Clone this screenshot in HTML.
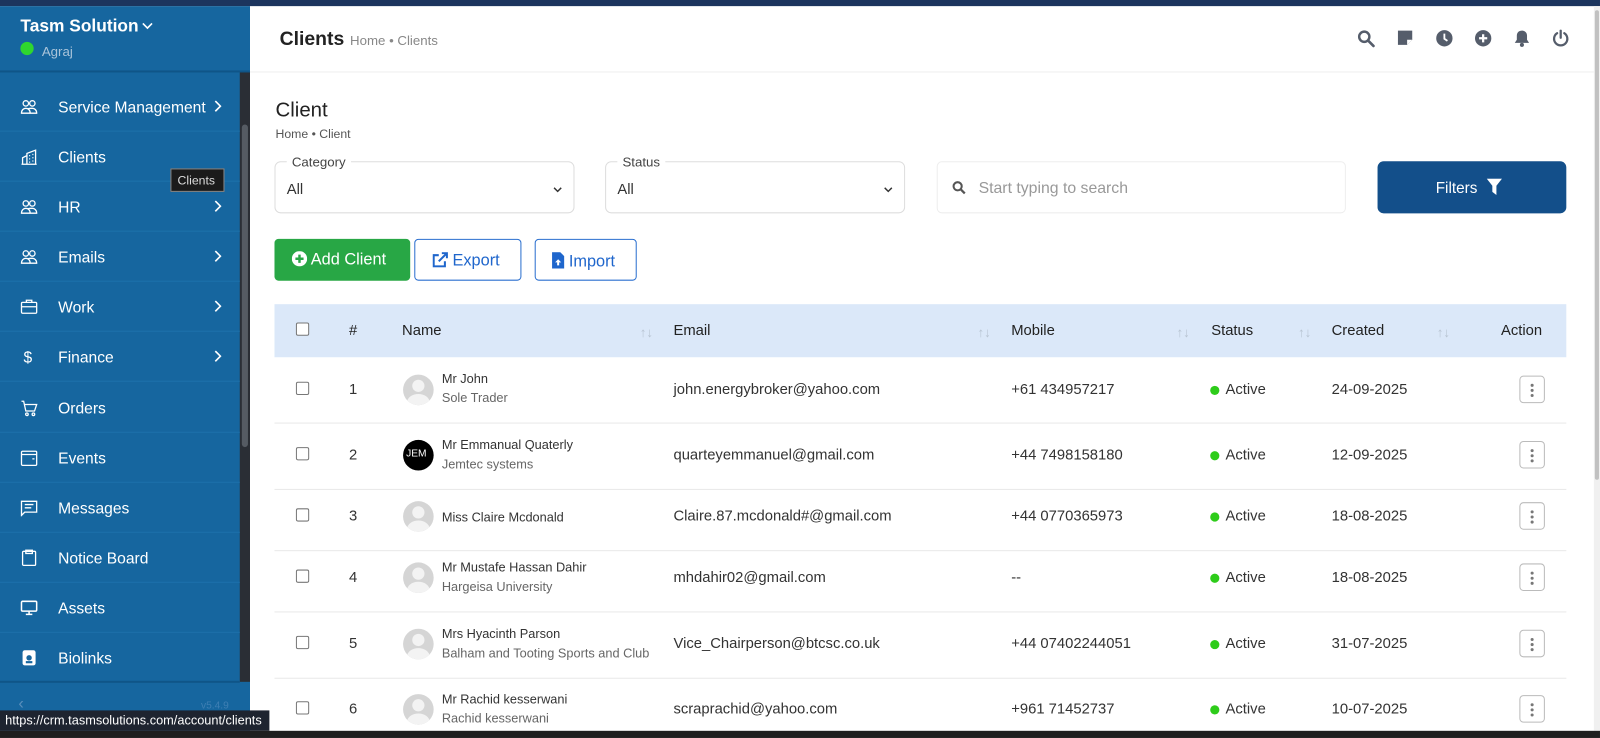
<!DOCTYPE html>
<html><head><meta charset="utf-8"><style>
*{box-sizing:border-box;margin:0;padding:0}
html,body{width:1600px;height:738px;overflow:hidden;background:#fff;font-family:"Liberation Sans",Arial,sans-serif}
#w{position:absolute;left:0;top:0;width:1568px;height:723px;transform:scale(1.0204,1.0207);transform-origin:0 0}
.a{position:absolute}
.sb{left:0;top:6px;width:245px;height:710px;background:#16669f}
.mi{position:absolute;left:0;width:235px;height:49px;border-bottom:1px solid #1d71ab;color:#fff;font-size:15.3px}
.mi span{position:absolute;left:57px;top:17px}
.mi svg{position:absolute;left:20px;top:16px}
.mi .ch{position:absolute;left:210px;top:18px}
.th{font-size:14.5px;color:#222;top:316px}
.srt{color:#b8c4d2;font-size:13px;top:318px}
.row{position:absolute;left:269px;width:1266px;border-bottom:1px solid #e8e8e8}
.cb{position:absolute;width:13px;height:13px;border:1px solid #777;border-radius:2px;background:#fff}
.t{position:absolute;font-size:14.5px;color:#333}
.av{position:absolute;left:395px;width:30px;height:30px;border-radius:50%;background:#d5d5d5;overflow:hidden}
.av:before{content:"";position:absolute;left:9px;top:5px;width:12px;height:12px;border-radius:50%;background:#f3f3f3}
.av:after{content:"";position:absolute;left:4px;top:19px;width:22px;height:16px;border-radius:50%;background:#f3f3f3}
.av.jem{background:#000}
.av.jem:before,.av.jem:after{display:none}
.nm{position:absolute;left:433px;font-size:12.5px;color:#333}
.sub{position:absolute;left:433px;font-size:12.5px;color:#666}
.dot{position:absolute;left:1186px;width:9px;height:9px;border-radius:50%;background:#2ecc1a}
.act{position:absolute;left:1489px;width:25px;height:27px;border:1px solid #bbb;border-radius:4px;background:#fff}
.act i{position:absolute;left:10px;width:3px;height:3px;border-radius:50%;background:#777}
.hi{position:absolute;top:29px}
</style></head><body><div id="w">
<div class="a" style="left:0;top:0;width:1568px;height:6px;background:#1c355e"></div>
<div class="a sb"></div>
<div class="a" style="left:20px;top:16px;color:#fff;font-size:17px;font-weight:bold">Tasm Solution</div>
<svg class="a" style="left:139px;top:22px" width="11" height="7" viewBox="0 0 11 7"><path d="M1 1l4.5 4.5L10 1" fill="none" stroke="#fff" stroke-width="1.6"/></svg>
<div class="a" style="left:20px;top:41px;width:13px;height:13px;border-radius:50%;background:#2fd62f"></div>
<div class="a" style="left:41px;top:43px;color:#a9c4da;font-size:13px">Agraj</div>
<div class="a" style="left:0;top:69px;width:245px;height:2px;background:#0f5588"></div>
<div class="a" style="left:235px;top:71px;width:10px;height:597px;background:#2a2e35"></div>
<div class="a" style="left:237px;top:122px;width:6px;height:316px;background:#555b63;border-radius:3px"></div>
<div class="mi" style="top:80px"><svg width="17" height="17" viewBox="0 0 16 16" fill="none" stroke="#fff" stroke-width="1.2"><circle cx="5" cy="5" r="2.5"/><circle cx="11" cy="5" r="2.5"/><path d="M1 14c0-3 2-4.5 4-4.5s4 1.5 4 4.5zM7 10c1-.5 2-.5 4-.5 2 0 4 1.5 4 4.5H9"/></svg><span>Service Management</span><svg class="ch" width="7" height="12" viewBox="0 0 7 12"><path d="M1 1l5 5-5 5" fill="none" stroke="#fff" stroke-width="1.6"/></svg></div>
<div class="mi" style="top:129px"><svg width="17" height="17" viewBox="0 0 16 16" fill="none" stroke="#fff" stroke-width="1.2"><path d="M1 15h14M2 15V9l4-2v8M6 15V5l8-3v13M8 7h1M11 6h1M8 10h1M11 9h1M8 13h1M11 12h1"/></svg><span>Clients</span></div>
<div class="mi" style="top:178px"><svg width="17" height="17" viewBox="0 0 16 16" fill="none" stroke="#fff" stroke-width="1.2"><circle cx="5" cy="5" r="2.5"/><circle cx="11" cy="5" r="2.5"/><path d="M1 14c0-3 2-4.5 4-4.5s4 1.5 4 4.5zM7 10c1-.5 2-.5 4-.5 2 0 4 1.5 4 4.5H9"/></svg><span>HR</span><svg class="ch" width="7" height="12" viewBox="0 0 7 12"><path d="M1 1l5 5-5 5" fill="none" stroke="#fff" stroke-width="1.6"/></svg></div>
<div class="mi" style="top:227px"><svg width="17" height="17" viewBox="0 0 16 16" fill="none" stroke="#fff" stroke-width="1.2"><circle cx="5" cy="5" r="2.5"/><circle cx="11" cy="5" r="2.5"/><path d="M1 14c0-3 2-4.5 4-4.5s4 1.5 4 4.5zM7 10c1-.5 2-.5 4-.5 2 0 4 1.5 4 4.5H9"/></svg><span>Emails</span><svg class="ch" width="7" height="12" viewBox="0 0 7 12"><path d="M1 1l5 5-5 5" fill="none" stroke="#fff" stroke-width="1.6"/></svg></div>
<div class="mi" style="top:276px"><svg width="17" height="17" viewBox="0 0 16 16" fill="none" stroke="#fff" stroke-width="1.2"><rect x="1" y="4" width="14" height="10" rx="1"/><path d="M5.5 4V2h5v2M1 8h14"/></svg><span>Work</span><svg class="ch" width="7" height="12" viewBox="0 0 7 12"><path d="M1 1l5 5-5 5" fill="none" stroke="#fff" stroke-width="1.6"/></svg></div>
<div class="mi" style="top:325px"><span style="left:23px">$</span><span>Finance</span><svg class="ch" width="7" height="12" viewBox="0 0 7 12"><path d="M1 1l5 5-5 5" fill="none" stroke="#fff" stroke-width="1.6"/></svg></div>
<div class="mi" style="top:375px"><svg width="17" height="17" viewBox="0 0 16 16" fill="none" stroke="#fff" stroke-width="1.2"><path d="M1 2h2l2 9h8l2-6H4"/><circle cx="6" cy="14" r="1.2"/><circle cx="12" cy="14" r="1.2"/></svg><span>Orders</span></div>
<div class="mi" style="top:424px"><svg width="17" height="17" viewBox="0 0 16 16" fill="none" stroke="#fff" stroke-width="1.2"><rect x="1" y="2" width="14" height="13" rx="1"/><path d="M1 5h14M11 9h2"/></svg><span>Events</span></div>
<div class="mi" style="top:473px"><svg width="17" height="17" viewBox="0 0 16 16" fill="none" stroke="#fff" stroke-width="1.2"><path d="M1 2h14v10H4l-3 3zM4 5h8M4 8h6"/></svg><span>Messages</span></div>
<div class="mi" style="top:522px"><svg width="17" height="17" viewBox="0 0 16 16" fill="none" stroke="#fff" stroke-width="1.2"><rect x="2" y="2" width="12" height="13" rx="1"/><rect x="5" y="1" width="6" height="3"/></svg><span>Notice Board</span></div>
<div class="mi" style="top:571px"><svg width="17" height="17" viewBox="0 0 16 16" fill="none" stroke="#fff" stroke-width="1.4"><rect x="1" y="2" width="14" height="9" rx="1"/><path d="M8 11v3M5 14h6"/></svg><span>Assets</span></div>
<div class="mi" style="top:620px;border-bottom:2px solid #0f5588"><svg width="17" height="17" viewBox="0 0 16 16"><rect x="2" y="1" width="12" height="14" rx="2" fill="#fff"/><circle cx="8" cy="8" r="2.5" fill="#16669f"/><rect x="5" y="11" width="6" height="2" fill="#16669f"/></svg><span>Biolinks</span></div>
<div class="a" style="left:18px;top:681px;color:#5a8fbc;font-size:16px">‹</div>
<div class="a" style="left:197px;top:686px;color:#3e7fb3;font-size:10px">v5.4.9</div>
<div class="a" style="left:167px;top:165px;width:53px;height:23px;background:#1b1b1b;border:1px solid #888;color:#ddd;font-size:12px;padding:4px 0 0 6px">Clients</div>
<div class="a" style="left:1562px;top:6px;width:6px;height:710px;background:#f0f0f0"></div>
<div class="a" style="left:1563px;top:10px;width:4px;height:460px;background:#c1c1c1;border-radius:2px"></div>
<div class="a" style="left:245px;top:70px;width:1317px;height:1px;background:#eee"></div>
<div class="a" style="left:274px;top:28px;font-size:19px;font-weight:bold;color:#222">Clients</div>
<div class="a" style="left:343px;top:32px;font-size:13px;color:#888">Home • Clients</div>
<svg class="hi" style="left:1330px" width="18" height="18" viewBox="0 0 18 18"><circle cx="7" cy="7" r="5" fill="none" stroke="#555d6b" stroke-width="2.4"/><path d="M11 11l5 5" stroke="#555d6b" stroke-width="2.6" stroke-linecap="round"/></svg>
<svg class="hi" style="left:1369px" width="16" height="16" viewBox="0 0 16 16"><path d="M1 1h14v9l-5 5H1z" fill="#555d6b"/><path d="M10 15v-5h5" fill="#fff"/></svg>
<svg class="hi" style="left:1407px" width="17" height="17" viewBox="0 0 17 17"><circle cx="8.5" cy="8.5" r="8" fill="#555d6b"/><path d="M8.5 4v5l3 2" stroke="#fff" stroke-width="1.8" fill="none"/></svg>
<svg class="hi" style="left:1445px" width="17" height="17" viewBox="0 0 17 17"><circle cx="8.5" cy="8.5" r="8" fill="#555d6b"/><path d="M8.5 4.5v8M4.5 8.5h8" stroke="#fff" stroke-width="2.2"/></svg>
<svg class="hi" style="left:1483px" width="17" height="17" viewBox="0 0 17 17"><path d="M8.5 1c3 0 5 2 5 5v4l2 3H1.5l2-3V6c0-3 2-5 5-5z" fill="#555d6b"/><circle cx="8.5" cy="15" r="2" fill="#555d6b"/></svg>
<svg class="hi" style="left:1521px" width="17" height="17" viewBox="0 0 17 17"><path d="M5 3.5a6.5 6.5 0 1 0 7 0" fill="none" stroke="#555d6b" stroke-width="2.2" stroke-linecap="round"/><path d="M8.5 1v7" stroke="#555d6b" stroke-width="2.2" stroke-linecap="round"/></svg>
<div class="a" style="left:270px;top:97px;font-size:20px;color:#222">Client</div>
<div class="a" style="left:270px;top:124px;font-size:12px;color:#555">Home • Client</div>
<div class="a" style="left:269px;top:158px;width:294px;height:51px;border:1px solid #ddd;border-radius:6px"></div>
<div class="a" style="left:281px;top:151px;background:#fff;padding:0 5px;font-size:13px;color:#444">Category</div>
<div class="a" style="left:281px;top:178px;font-size:14.5px;color:#333">All</div>
<svg class="a" style="left:542px;top:183px" width="9" height="6" viewBox="0 0 9 6"><path d="M1 1l3.5 3.5L8 1" fill="none" stroke="#333" stroke-width="1.4"/></svg>
<div class="a" style="left:593px;top:158px;width:294px;height:51px;border:1px solid #ddd;border-radius:6px"></div>
<div class="a" style="left:605px;top:151px;background:#fff;padding:0 5px;font-size:13px;color:#444">Status</div>
<div class="a" style="left:605px;top:178px;font-size:14.5px;color:#333">All</div>
<svg class="a" style="left:866px;top:183px" width="9" height="6" viewBox="0 0 9 6"><path d="M1 1l3.5 3.5L8 1" fill="none" stroke="#333" stroke-width="1.4"/></svg>
<div class="a" style="left:918px;top:158px;width:401px;height:51px;border:1px solid #eee;border-radius:5px"></div>
<svg class="a" style="left:933px;top:177px" width="14" height="14" viewBox="0 0 14 14"><circle cx="5.5" cy="5.5" r="4" fill="none" stroke="#555" stroke-width="2"/><path d="M8.5 8.5l4 4" stroke="#555" stroke-width="2.2"/></svg>
<div class="a" style="left:959px;top:176px;font-size:15.5px;color:#999">Start typing to search</div>
<div class="a" style="left:1350px;top:158px;width:185px;height:51px;background:#134f8a;border-radius:6px;color:#fff;font-size:15px;padding:17px 0 0 57px">Filters <svg style="vertical-align:-2px;margin-left:5px" width="15" height="16" viewBox="0 0 15 16"><path d="M0 0h15l-5.5 7v9l-4-3V7z" fill="#fff"/></svg></div>
<div class="a" style="left:269px;top:234px;width:133px;height:41px;background:#28a745;border-radius:4px;color:#fff;font-size:16px;padding:12px 0 0 17px"><svg style="vertical-align:-2px" width="15" height="15" viewBox="0 0 15 15"><circle cx="7.5" cy="7.5" r="7.5" fill="#fff"/><path d="M7.5 3.5v8M3.5 7.5h8" stroke="#28a745" stroke-width="2.4"/></svg> Add Client</div>
<div class="a" style="left:406px;top:234px;width:105px;height:41px;border:1px solid #2a6fcf;border-radius:4px;color:#1f66cc;font-size:16px;padding:12px 0 0 17px"><svg style="vertical-align:-2px" width="15" height="15" viewBox="0 0 15 15" fill="none" stroke="#1f66cc" stroke-width="2"><path d="M12 9v5H1V3h5M9 1h5v5M14 1L6 9"/></svg> Export</div>
<div class="a" style="left:524px;top:234px;width:100px;height:41px;border:1px solid #2a6fcf;border-radius:4px;color:#1f66cc;font-size:16px;padding:12px 0 0 16px"><svg style="vertical-align:-2px" width="12" height="16" viewBox="0 0 12 16"><path d="M0 0h8l4 4v12H0z" fill="#1f66cc"/><path d="M6 7l-3 3h2v3h2v-3h2z" fill="#fff"/></svg> Import</div>
<div class="a" style="left:269px;top:298px;width:1266px;height:52px;background:#dbe8f9"></div>
<div class="cb" style="left:290px;top:316px"></div>
<div class="a th" style="left:342px">#</div>
<div class="a th" style="left:394px">Name</div>
<div class="a th" style="left:660px">Email</div>
<div class="a th" style="left:991px">Mobile</div>
<div class="a th" style="left:1187px">Status</div>
<div class="a th" style="left:1305px">Created</div>
<div class="a th" style="left:1471px">Action</div>
<div class="a srt" style="left:627px">↑↓</div>
<div class="a srt" style="left:958px">↑↓</div>
<div class="a srt" style="left:1153px">↑↓</div>
<div class="a srt" style="left:1272px">↑↓</div>
<div class="a srt" style="left:1408px">↑↓</div>
<div class="row" style="top:350px;height:65px"></div>
<div class="row" style="top:415px;height:65px"></div>
<div class="row" style="top:480px;height:60px"></div>
<div class="row" style="top:540px;height:60px"></div>
<div class="row" style="top:600px;height:65px"></div>
<div class="cb" style="left:290px;top:374px"></div><div class="t" style="left:342px;top:374px">1</div>
<div class="av" style="top:367px"></div><div class="nm" style="top:364px">Mr John</div><div class="sub" style="top:383px">Sole Trader</div>
<div class="t" style="left:660px;top:374px">john.energybroker@yahoo.com</div><div class="t" style="left:991px;top:374px">+61 434957217</div>
<div class="dot" style="top:378px"></div><div class="t" style="left:1201px;top:374px">Active</div><div class="t" style="left:1305px;top:374px">24-09-2025</div>
<div class="act" style="top:368px"><i style="top:7px"></i><i style="top:12px"></i><i style="top:17px"></i></div>
<div class="cb" style="left:290px;top:438px"></div><div class="t" style="left:342px;top:438px">2</div>
<div class="av jem" style="top:431px"><span style="position:absolute;left:3px;top:8px;color:#fff;font-size:10px">JEM</span></div><div class="nm" style="top:429px">Mr Emmanual Quaterly</div><div class="sub" style="top:448px">Jemtec systems</div>
<div class="t" style="left:660px;top:438px">quarteyemmanuel@gmail.com</div><div class="t" style="left:991px;top:438px">+44 7498158180</div>
<div class="dot" style="top:442px"></div><div class="t" style="left:1201px;top:438px">Active</div><div class="t" style="left:1305px;top:438px">12-09-2025</div>
<div class="act" style="top:432px"><i style="top:7px"></i><i style="top:12px"></i><i style="top:17px"></i></div>
<div class="cb" style="left:290px;top:498px"></div><div class="t" style="left:342px;top:498px">3</div>
<div class="av" style="top:491px"></div><div class="nm" style="top:500px">Miss Claire Mcdonald</div>
<div class="t" style="left:660px;top:498px">Claire.87.mcdonald#@gmail.com</div><div class="t" style="left:991px;top:498px">+44 0770365973</div>
<div class="dot" style="top:502px"></div><div class="t" style="left:1201px;top:498px">Active</div><div class="t" style="left:1305px;top:498px">18-08-2025</div>
<div class="act" style="top:492px"><i style="top:7px"></i><i style="top:12px"></i><i style="top:17px"></i></div>
<div class="cb" style="left:290px;top:558px"></div><div class="t" style="left:342px;top:558px">4</div>
<div class="av" style="top:551px"></div><div class="nm" style="top:549px">Mr Mustafe Hassan Dahir</div><div class="sub" style="top:568px">Hargeisa University</div>
<div class="t" style="left:660px;top:558px">mhdahir02@gmail.com</div><div class="t" style="left:991px;top:558px">--</div>
<div class="dot" style="top:562px"></div><div class="t" style="left:1201px;top:558px">Active</div><div class="t" style="left:1305px;top:558px">18-08-2025</div>
<div class="act" style="top:552px"><i style="top:7px"></i><i style="top:12px"></i><i style="top:17px"></i></div>
<div class="cb" style="left:290px;top:623px"></div><div class="t" style="left:342px;top:623px">5</div>
<div class="av" style="top:616px"></div><div class="nm" style="top:614px">Mrs Hyacinth Parson</div><div class="sub" style="top:633px">Balham and Tooting Sports and Club</div>
<div class="t" style="left:660px;top:623px">Vice_Chairperson@btcsc.co.uk</div><div class="t" style="left:991px;top:623px">+44 07402244051</div>
<div class="dot" style="top:627px"></div><div class="t" style="left:1201px;top:623px">Active</div><div class="t" style="left:1305px;top:623px">31-07-2025</div>
<div class="act" style="top:617px"><i style="top:7px"></i><i style="top:12px"></i><i style="top:17px"></i></div>
<div class="cb" style="left:290px;top:687px"></div><div class="t" style="left:342px;top:687px">6</div>
<div class="av" style="top:680px"></div><div class="nm" style="top:678px">Mr Rachid kesserwani</div><div class="sub" style="top:697px">Rachid kesserwani</div>
<div class="t" style="left:660px;top:687px">scraprachid@yahoo.com</div><div class="t" style="left:991px;top:687px">+961 71452737</div>
<div class="dot" style="top:691px"></div><div class="t" style="left:1201px;top:687px">Active</div><div class="t" style="left:1305px;top:687px">10-07-2025</div>
<div class="act" style="top:681px"><i style="top:7px"></i><i style="top:12px"></i><i style="top:17px"></i></div>
<div class="a" style="left:0;top:696px;width:264px;height:20px;background:#1e2430;color:#fff;font-size:12.5px;padding:3px 0 0 5px">https://crm.tasmsolutions.com/account/clients</div>
<div class="a" style="left:0;top:716px;width:1568px;height:7px;background:#1f1f1f"></div>
</div></body></html>
